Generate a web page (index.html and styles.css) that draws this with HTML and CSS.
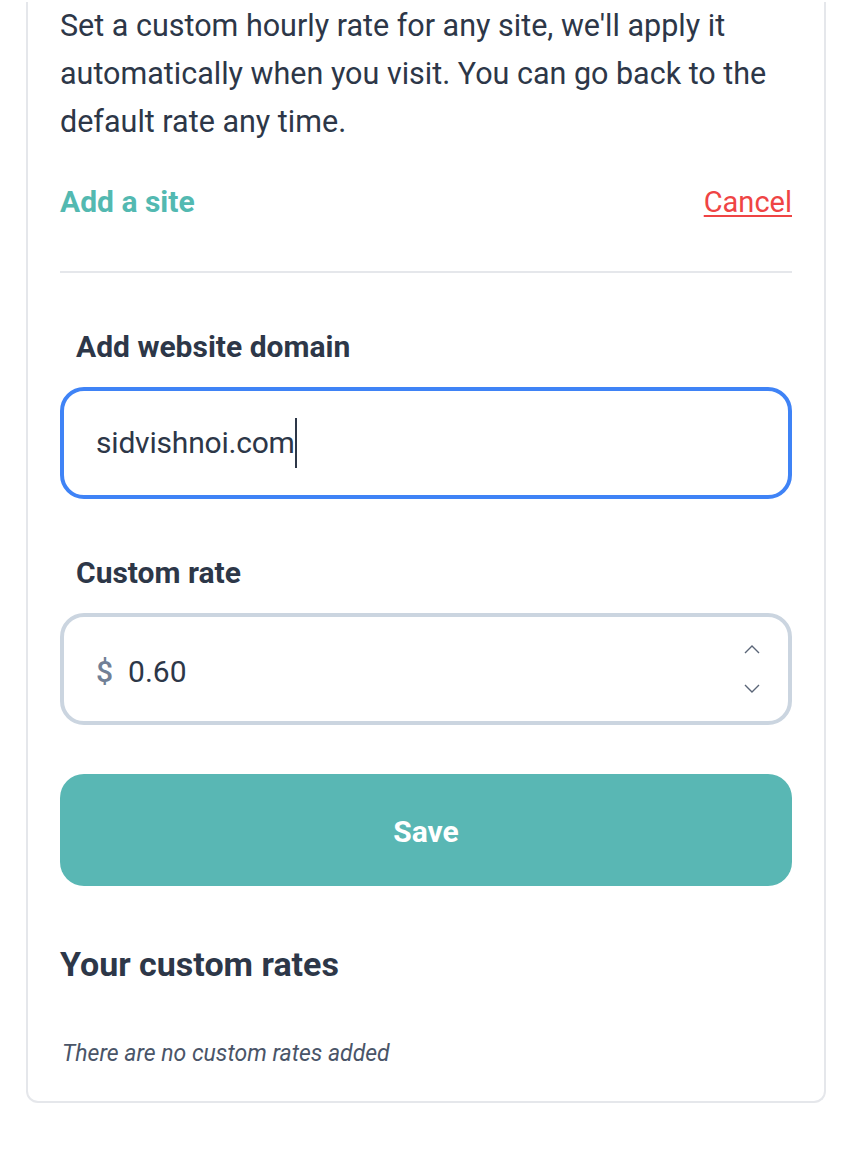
FILE: index.html
```html
<!DOCTYPE html>
<html lang="en">
<head>
<meta charset="utf-8">
<title>Custom rates</title>
<link rel="stylesheet" href="styles.css">
</head>
<body>
<div class="card">
  <p class="intro">Set a custom hourly rate for any site, we'll apply it automatically when you visit. You can go back to the default rate any time.</p>
  <div class="actions">
    <span class="add-title">Add a site</span>
    <a class="cancel" href="#">Cancel</a>
  </div>
  <hr class="divider">
  <form class="form">
    <label class="label">Add website domain</label>
    <div class="field field-focus">
      <span class="value">sidvishnoi.com</span><span class="caret"></span>
    </div>
    <label class="label">Custom rate</label>
    <div class="field field-number">
      <span class="prefix">$</span>
      <span class="value">0.60</span>
      <span class="spinner">
        <svg class="chev" width="16" height="10" viewBox="0 0 16 10"><path d="M1 9 L8 2 L15 9" fill="none" stroke="#5a6577" stroke-width="1.4"/></svg>
        <svg class="chev" width="16" height="10" viewBox="0 0 16 10"><path d="M1 1 L8 8 L15 1" fill="none" stroke="#5a6577" stroke-width="1.4"/></svg>
      </span>
    </div>
    <button class="save" type="button">Save</button>
  </form>
  <h2 class="list-title">Your custom rates</h2>
  <p class="empty">There are no custom rates added</p>
</div>
</body>
</html>
```
FILE: styles.css
```css
* { box-sizing: border-box; }

html, body {
  margin: 0;
  padding: 0;
  background: #ffffff;
}

body {
  font-family: Roboto, "Liberation Sans", Arial, sans-serif;
  color: #2d3748;
}

.card {
  width: 800px;
  margin-left: 26px;
  border: 2px solid #e5e7eb;
  border-top: none;
  border-radius: 0 0 12px 12px;
  padding: 0 32px 29px 32px;
}

.intro {
  margin: 2px 0 0 0;
  font-size: 30.5px;
  line-height: 48px;
  color: #2d3748;
}

.actions {
  margin-top: 32px;
  display: flex;
  justify-content: space-between;
  align-items: center;
  font-size: 30px;
  line-height: 48px;
}

.add-title {
  font-weight: 700;
  color: #53b9b1;
}

.cancel {
  color: #ef4444;
  text-decoration: underline;
  text-decoration-thickness: 2px;
  text-underline-offset: 3px;
  font-size: 29px;
}

.divider {
  margin: 45px 0 0 0;
  border: none;
  height: 2px;
  background: #e5e7eb;
}

.form {
  display: flex;
  flex-direction: column;
}

.label {
  margin-top: 50px;
  padding-left: 16px;
  font-size: 30px;
  line-height: 48px;
  font-weight: 700;
  color: #2d3748;
}

.field {
  margin-top: 16px;
  height: 112px;
  border: 4px solid #cbd5e0;
  border-radius: 24px;
  display: flex;
  align-items: center;
  padding: 0 28px 0 32px;
  font-size: 30px;
  line-height: 48px;
  color: #2d3748;
}

.field-focus {
  border-color: #3f83f6;
}

.field-focus .value {
  letter-spacing: -0.2px;
}

.caret {
  display: inline-block;
  width: 2px;
  height: 50px;
  background: #2d3748;
  margin-left: 0;
}

.field-number {
  padding-top: 5px;
}

.prefix {
  color: #718096;
  font-weight: 500;
  margin-right: 15px;
}

.spinner {
  margin-left: auto;
  display: flex;
  flex-direction: column;
  gap: 30px;
  margin-top: -5px;
}

.chev {
  display: block;
}

.save {
  margin-top: 49px;
  height: 112px;
  border: none;
  border-radius: 24px;
  background: #59b7b4;
  color: #ffffff;
  font-family: inherit;
  font-size: 30px;
  font-weight: 700;
  padding-top: 3px;
}

.list-title {
  margin: 54px 0 0 0;
  font-size: 34px;
  line-height: 48px;
  font-weight: 700;
  color: #2d3748;
}

.empty {
  margin: 48px 0 0 2px;
  font-size: 23px;
  line-height: 36px;
  font-style: italic;
  color: #4a5568;
}
```
